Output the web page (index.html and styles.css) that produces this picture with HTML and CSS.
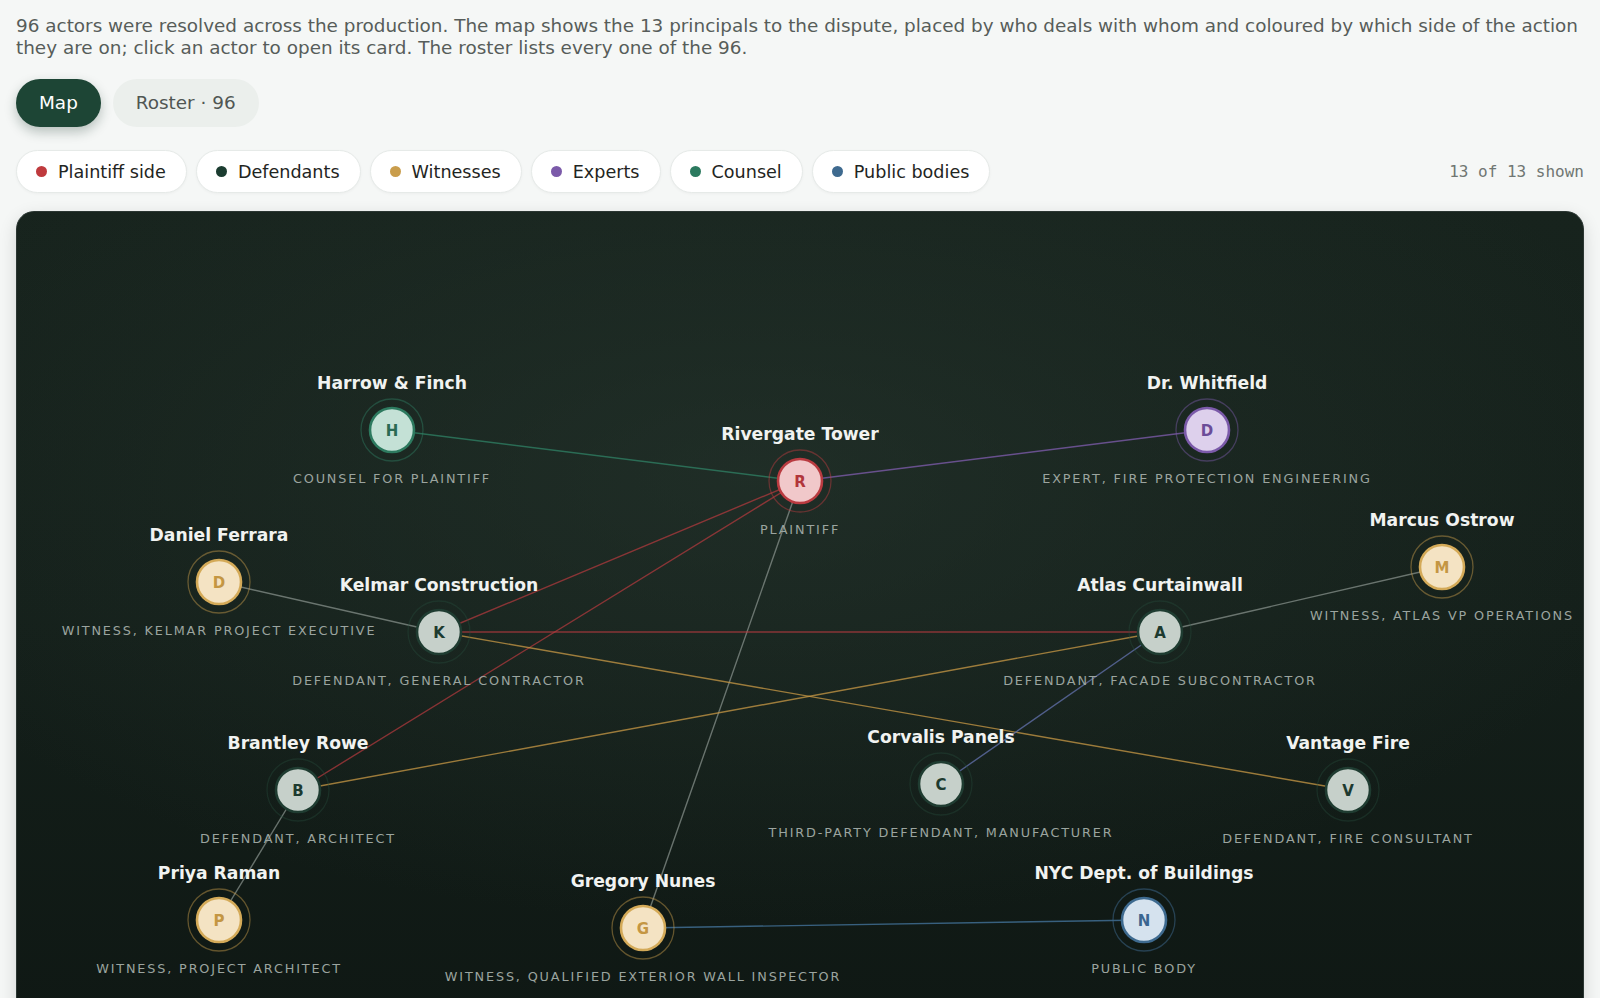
FILE: index.html
```html
<!DOCTYPE html>
<html lang="en">
<head>
<meta charset="utf-8">
<title>Actors</title>
<link rel="stylesheet" href="styles.css">
</head>
<body>
<main class="page">
  <p class="intro">96 actors were resolved across the production. The map shows the 13 principals to the dispute, placed by who deals with whom and coloured by which side of the action they are on; click an actor to open its card. The roster lists every one of the 96.</p>

  <nav class="tabs">
    <button class="tab tab-active">Map</button>
    <button class="tab">Roster · 96</button>
  </nav>

  <div class="legend-row">
    <div class="legend">
      <span class="chip"><span class="dot dot-plaintiff"></span>Plaintiff side</span>
      <span class="chip"><span class="dot dot-defendant"></span>Defendants</span>
      <span class="chip"><span class="dot dot-witness"></span>Witnesses</span>
      <span class="chip"><span class="dot dot-expert"></span>Experts</span>
      <span class="chip"><span class="dot dot-counsel"></span>Counsel</span>
      <span class="chip"><span class="dot dot-public"></span>Public bodies</span>
    </div>
    <span class="count">13 of 13 shown</span>
  </div>

  <section class="map">
    <svg class="map-svg" width="1568" height="820" viewBox="0 0 1568 820" xmlns="http://www.w3.org/2000/svg">
      <g class="edges" stroke-width="1.4" fill="none">
        <line x1="376" y1="219" x2="784" y2="270" stroke="#2e7d62" stroke-opacity="0.8"/>
        <line x1="784" y1="270" x2="1191" y2="219" stroke="#7a5aa8" stroke-opacity="0.8"/>
        <line x1="784" y1="270" x2="423" y2="421" stroke="#b83a3e" stroke-opacity="0.7"/>
        <line x1="784" y1="270" x2="282" y2="579" stroke="#b83a3e" stroke-opacity="0.7"/>
        <line x1="784" y1="270" x2="627" y2="717" stroke="#8d9792" stroke-opacity="0.7"/>
        <line x1="203" y1="371" x2="423" y2="421" stroke="#8d9792" stroke-opacity="0.7"/>
        <line x1="423" y1="421" x2="1144" y2="421" stroke="#b83a3e" stroke-opacity="0.7"/>
        <line x1="423" y1="421" x2="1332" y2="579" stroke="#c99a45" stroke-opacity="0.75"/>
        <line x1="1144" y1="421" x2="282" y2="579" stroke="#c99a45" stroke-opacity="0.75"/>
        <line x1="1144" y1="421" x2="1426" y2="356" stroke="#8d9792" stroke-opacity="0.7"/>
        <line x1="1144" y1="421" x2="925" y2="573" stroke="#5f6ea6" stroke-opacity="0.8"/>
        <line x1="282" y1="579" x2="203" y2="709" stroke="#8d9792" stroke-opacity="0.7"/>
        <line x1="627" y1="717" x2="1128" y2="709" stroke="#3f6d92" stroke-opacity="0.85"/>
      </g>

      <g class="node counsel" transform="translate(376 219)">
        <circle class="halo" r="31"/><circle class="disc" r="22"/>
        <text class="initial" y="5.5">H</text>
        <text class="name" y="-41">Harrow &amp; Finch</text>
        <text class="role" y="52.5">COUNSEL FOR PLAINTIFF</text>
      </g>
      <g class="node plaintiff" transform="translate(784 270)">
        <circle class="halo" r="31"/><circle class="disc" r="22"/>
        <text class="initial" y="5.5">R</text>
        <text class="name" y="-41">Rivergate Tower</text>
        <text class="role" y="52.5">PLAINTIFF</text>
      </g>
      <g class="node expert" transform="translate(1191 219)">
        <circle class="halo" r="31"/><circle class="disc" r="22"/>
        <text class="initial" y="5.5">D</text>
        <text class="name" y="-41">Dr. Whitfield</text>
        <text class="role" y="52.5">EXPERT, FIRE PROTECTION ENGINEERING</text>
      </g>
      <g class="node witness" transform="translate(203 371)">
        <circle class="halo" r="31"/><circle class="disc" r="22"/>
        <text class="initial" y="5.5">D</text>
        <text class="name" y="-41">Daniel Ferrara</text>
        <text class="role" y="52.5">WITNESS, KELMAR PROJECT EXECUTIVE</text>
      </g>
      <g class="node defendant" transform="translate(423 421)">
        <circle class="halo" r="31"/><circle class="disc" r="22"/>
        <text class="initial" y="5.5">K</text>
        <text class="name" y="-41">Kelmar Construction</text>
        <text class="role" y="52.5">DEFENDANT, GENERAL CONTRACTOR</text>
      </g>
      <g class="node defendant" transform="translate(1144 421)">
        <circle class="halo" r="31"/><circle class="disc" r="22"/>
        <text class="initial" y="5.5">A</text>
        <text class="name" y="-41">Atlas Curtainwall</text>
        <text class="role" y="52.5">DEFENDANT, FACADE SUBCONTRACTOR</text>
      </g>
      <g class="node witness" transform="translate(1426 356)">
        <circle class="halo" r="31"/><circle class="disc" r="22"/>
        <text class="initial" y="5.5">M</text>
        <text class="name" y="-41">Marcus Ostrow</text>
        <text class="role" y="52.5">WITNESS, ATLAS VP OPERATIONS</text>
      </g>
      <g class="node defendant" transform="translate(282 579)">
        <circle class="halo" r="31"/><circle class="disc" r="22"/>
        <text class="initial" y="5.5">B</text>
        <text class="name" y="-41">Brantley Rowe</text>
        <text class="role" y="52.5">DEFENDANT, ARCHITECT</text>
      </g>
      <g class="node defendant" transform="translate(925 573)">
        <circle class="halo" r="31"/><circle class="disc" r="22"/>
        <text class="initial" y="5.5">C</text>
        <text class="name" y="-41">Corvalis Panels</text>
        <text class="role" y="52.5">THIRD-PARTY DEFENDANT, MANUFACTURER</text>
      </g>
      <g class="node defendant" transform="translate(1332 579)">
        <circle class="halo" r="31"/><circle class="disc" r="22"/>
        <text class="initial" y="5.5">V</text>
        <text class="name" y="-41">Vantage Fire</text>
        <text class="role" y="52.5">DEFENDANT, FIRE CONSULTANT</text>
      </g>
      <g class="node witness" transform="translate(203 709)">
        <circle class="halo" r="31"/><circle class="disc" r="22"/>
        <text class="initial" y="5.5">P</text>
        <text class="name" y="-41">Priya Raman</text>
        <text class="role" y="52.5">WITNESS, PROJECT ARCHITECT</text>
      </g>
      <g class="node witness" transform="translate(627 717)">
        <circle class="halo" r="31"/><circle class="disc" r="22"/>
        <text class="initial" y="5.5">G</text>
        <text class="name" y="-41">Gregory Nunes</text>
        <text class="role" y="52.5">WITNESS, QUALIFIED EXTERIOR WALL INSPECTOR</text>
      </g>
      <g class="node public" transform="translate(1128 709)">
        <circle class="halo" r="31"/><circle class="disc" r="22"/>
        <text class="initial" y="5.5">N</text>
        <text class="name" y="-41">NYC Dept. of Buildings</text>
        <text class="role" y="52.5">PUBLIC BODY</text>
      </g>
    </svg>
  </section>
</main>
</body>
</html>
```

FILE: styles.css
```css
* { box-sizing: border-box; }

html, body {
  margin: 0;
  padding: 0;
  background: #f5f7f6;
}

body {
  font-family: "DejaVu Sans", "Noto Sans", sans-serif;
  color: #2a2f2c;
}

.page {
  padding: 15px 16px 0 16px;
}

.intro {
  margin: 0;
  font-size: 18.4px;
  line-height: 21.5px;
  color: #575d5a;
}

.tabs {
  display: flex;
  gap: 12px;
  margin-top: 21px;
}

.tab {
  font-family: "DejaVu Sans", "Noto Sans", sans-serif;
  font-size: 18.4px;
  line-height: 22px;
  padding: 13px 23px;
  border: none;
  border-radius: 999px;
  background: #ebefec;
  color: #505653;
  cursor: pointer;
}

.tab-active {
  background: #1d4535;
  color: #ffffff;
  box-shadow: 0 5px 12px rgba(20, 50, 38, 0.28);
}

.legend-row {
  display: flex;
  align-items: center;
  justify-content: space-between;
  margin-top: 23px;
}

.legend {
  display: flex;
  gap: 9px;
}

.chip {
  display: inline-flex;
  align-items: center;
  gap: 11px;
  height: 43px;
  padding: 0 20px 0 19px;
  background: #ffffff;
  border: 1px solid #e6eae8;
  border-radius: 999px;
  font-size: 17.6px;
  color: #1f2522;
  box-shadow: 0 1px 3px rgba(0, 0, 0, 0.04);
}

.dot {
  width: 11px;
  height: 11px;
  border-radius: 50%;
  flex: none;
}

.dot-plaintiff { background: #bf3a3d; }
.dot-defendant { background: #1b3c30; }
.dot-witness { background: #c99d4c; }
.dot-expert { background: #7b5aa9; }
.dot-counsel { background: #2c7a5f; }
.dot-public { background: #3e6a8f; }

.count {
  font-family: "DejaVu Sans Mono", "Liberation Mono", monospace;
  font-size: 16px;
  color: #6f7672;
}

.map {
  position: relative;
  margin-top: 18px;
  height: 820px;
  border-radius: 18px;
  overflow: hidden;
  border: 1px solid #2b3632;
  background:
    radial-gradient(ellipse 60% 55% at 47% 32%, rgba(40, 56, 48, 0.55) 0%, rgba(40, 56, 48, 0) 100%),
    linear-gradient(180deg, #17231d 0%, #141f1a 50%, #0f1814 100%);
  box-shadow: 0 6px 18px rgba(0, 0, 0, 0.14);
}

.map-svg {
  position: absolute;
  left: -1px;
  top: -1px;
  display: block;
}

.node text {
  text-anchor: middle;
  font-family: "DejaVu Sans", "Noto Sans", sans-serif;
}

.node .name {
  font-size: 17.2px;
  font-weight: 700;
  fill: #f1f3f1;
}

.node .role {
  font-size: 12.8px;
  letter-spacing: 1.85px;
  fill: #9ba49f;
}

.node .initial {
  font-size: 15px;
  font-weight: 700;
}

.node .halo {
  fill: none;
  stroke-width: 1.3;
}

.node .disc {
  stroke-width: 2.6;
}

.plaintiff .halo { stroke: rgba(190, 60, 64, 0.45); }
.plaintiff .disc { fill: #f1c8ca; stroke: #b93b40; }
.plaintiff .initial { fill: #b1353a; }

.counsel .halo { stroke: rgba(46, 125, 98, 0.45); }
.counsel .disc { fill: #c4e1d6; stroke: #2d7a5f; }
.counsel .initial { fill: #2a6a53; }

.expert .halo { stroke: rgba(122, 90, 168, 0.45); }
.expert .disc { fill: #ddd0ec; stroke: #7b5aa9; }
.expert .initial { fill: #6b4c98; }

.witness .halo { stroke: rgba(201, 157, 76, 0.45); }
.witness .disc { fill: #f4e3c3; stroke: #d4aa58; }
.witness .initial { fill: #c49642; }

.defendant .halo { stroke: rgba(40, 80, 64, 0.35); }
.defendant .disc { fill: #c6d0ca; stroke: #1f3c31; }
.defendant .initial { fill: #1d3a2f; }

.public .halo { stroke: rgba(62, 106, 143, 0.5); }
.public .disc { fill: #d5e2ee; stroke: #3e6a8f; }
.public .initial { fill: #3a6590; }
```
